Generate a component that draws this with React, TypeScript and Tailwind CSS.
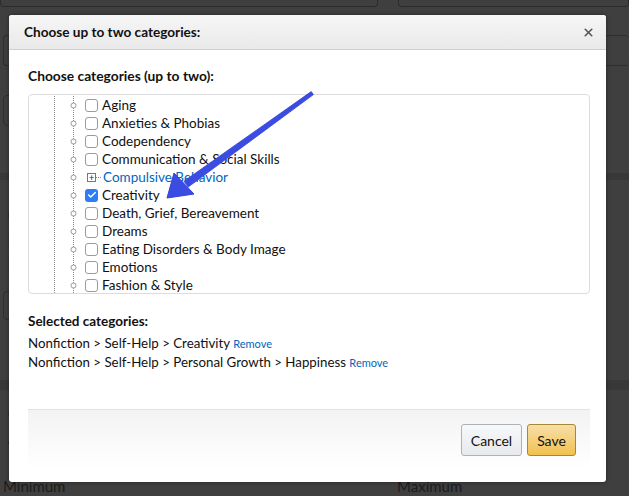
import { Check, X } from "lucide-react";

const rows = [
  { label: "Aging" },
  { label: "Anxieties & Phobias" },
  { label: "Codependency" },
  { label: "Communication & Social Skills" },
  { label: "Compulsive Behavior", folder: true },
  { label: "Creativity", checked: true },
  { label: "Death, Grief, Bereavement" },
  { label: "Dreams" },
  { label: "Eating Disorders & Body Image" },
  { label: "Emotions" },
  { label: "Fashion & Style" },
];

const selected = [
  "Nonfiction > Self-Help > Creativity",
  "Nonfiction > Self-Help > Personal Growth > Happiness",
];

function Connector() {
  return (
    <svg width="31" height="18" className="shrink-0">
      <line x1="0.5" y1="0" x2="0.5" y2="18" stroke="#8a8a8a" strokeDasharray="1 1" />
      <line x1="19.5" y1="0" x2="19.5" y2="18" stroke="#8a8a8a" strokeDasharray="1 1" />
      <circle cx="19.5" cy="9.5" r="2.5" fill="#fff" stroke="#9a9a9a" />
    </svg>
  );
}

function TreeRow({ label, checked, folder }: { label: string; checked?: boolean; folder?: boolean }) {
  return (
    <div className="flex h-[18px] items-center pl-[25px]">
      <Connector />
      {folder ? (
        <div className="flex items-center">
          <div className="ml-[2px] flex h-[9px] w-[9px] items-center justify-center border border-[#777] bg-white text-[9px] leading-none text-[#222]">
            +
          </div>
          <div className="h-0 w-[5px] border-t border-dotted border-[#888]" />
          <span className="ml-[2px] text-[13.5px] text-[#0066c0]">{label}</span>
        </div>
      ) : (
        <div className="flex items-center">
          {checked ? (
            <div className="flex h-[13px] w-[13px] items-center justify-center rounded-[3px] bg-[#2f7df6]">
              <Check className="h-[10px] w-[10px] text-white" strokeWidth={3.5} />
            </div>
          ) : (
            <div className="h-[13px] w-[13px] rounded-[3px] border border-[#9b9b9b] bg-white" />
          )}
          <span className="ml-[4px] text-[13.5px] text-[#111]">{label}</span>
        </div>
      )}
    </div>
  );
}

function Arrow() {
  return (
    <svg className="pointer-events-none absolute left-0 top-0" width="629" height="496">
      <polygon
        points="311.2,91.6 313.4,94.6 188.2,187 184,181.2"
        fill="#3b4ce3"
        stroke="#3443d4"
        strokeWidth="0.8"
        strokeLinejoin="round"
      />
      <polygon points="167,198 174,173 194,194" fill="#3b4ce3" stroke="#3443d4" strokeWidth="1" strokeLinejoin="round" />
    </svg>
  );
}

export default function App() {
  return (
    <div className="relative h-[496px] w-[629px] overflow-hidden bg-[#3f3f3f] font-['Lato',sans-serif]">
      {/* page behind the overlay */}
      <div className="flex flex-col text-[#1c1c1c]">
        <div className="flex h-[7px] gap-[20px]">
          <div className="w-[378px] rounded-b-[4px] border border-t-0 border-[#2c2c2c]" />
          <div className="flex-1 rounded-b-[4px] border border-t-0 border-[#2c2c2c]" />
        </div>
        <div className="ml-[3px] mt-[28px] h-[31px] rounded-[4px] border border-r-0 border-[#2e2e2e]" />
        <div className="ml-[3px] mt-[29px] h-[31px] w-[560px] rounded-[4px] border border-[#2e2e2e]" />
        <div className="mt-[47px] h-[7px] bg-[#383838]" />
        <div className="ml-[8px] mt-[26px] text-[15px] font-bold leading-[18px]">C</div>
        <div className="ml-[8px] mt-[8px] text-[13px] leading-[18px]">N</div>
        <div className="ml-[8px] mt-[7px] text-[13px] leading-[18px]">N</div>
        <div className="ml-[3px] mt-[16px] h-[29px] w-[560px] rounded-[4px] border border-[#2e2e2e]" />
        <div className="mt-[60px] h-[10px] bg-[#383838]" />
        <div className="ml-[8px] mt-[14px] text-[15px] font-bold leading-[18px]">C</div>
        <div className="ml-[8px] mt-[8px] text-[13px] leading-[18px]">A</div>
        <div className="mt-[29px] flex text-[15px] leading-[18px]">
          <span className="ml-[3px] w-[394px]">Minimum</span>
          <span>Maximum</span>
        </div>
      </div>

      {/* modal */}
      <div className="absolute left-[9px] top-[15px] flex h-[467px] w-[597px] flex-col overflow-hidden rounded-[3px] bg-white shadow-[0_0_4px_rgba(0,0,0,0.4)]">
        <div className="flex h-[35px] shrink-0 items-center justify-between border-b border-[#cfcfcf] bg-gradient-to-b from-[#f6f6f6] to-[#e9e9e9] pl-[15px] pr-[11px]">
          <span className="text-[13.6px] font-bold text-[#111]">Choose up to two categories:</span>
          <X className="h-[13px] w-[13px] text-[#555]" strokeWidth={3} />
        </div>

        <div className="flex flex-1 flex-col pl-[19px] pr-[16px]">
          <div className="mt-[17px] text-[13.8px] font-bold leading-[18px] text-[#111]">
            Choose categories (up to two):
          </div>
          <div className="mt-[9px] h-[200px] overflow-hidden rounded-[4px] border border-[#dcdcdc] pt-[1px]">
            {rows.map((r) => (
              <TreeRow key={r.label} {...r} />
            ))}
          </div>

          <div className="mt-[18px] text-[13.5px] font-bold leading-[18px] text-[#111]">Selected categories:</div>
          <div className="mt-[4px] flex flex-col text-[13.3px] leading-[19px] text-[#111]">
            {selected.map((s) => (
              <div key={s}>
                {s} <span className="text-[11px] text-[#0066c0]">Remove</span>
              </div>
            ))}
          </div>

          <div className="mt-[37px] flex h-[60px] items-start justify-end gap-[5px] border-t border-[#e2e2e2] bg-gradient-to-b from-[#f3f3f3] to-white pr-[14px] pt-[14px]">
            <button className="h-[32px] w-[61px] rounded-[3px] border border-[#adb1b8] bg-gradient-to-b from-[#f7f8fa] to-[#e7e9ec] text-[14px] text-[#111]">
              Cancel
            </button>
            <button className="h-[32px] w-[49px] rounded-[3px] border border-[#a88734] bg-gradient-to-b from-[#f7dfa5] to-[#f0c14b] text-[14px] text-[#111]">
              Save
            </button>
          </div>
        </div>
      </div>

      <Arrow />
    </div>
  );
}
